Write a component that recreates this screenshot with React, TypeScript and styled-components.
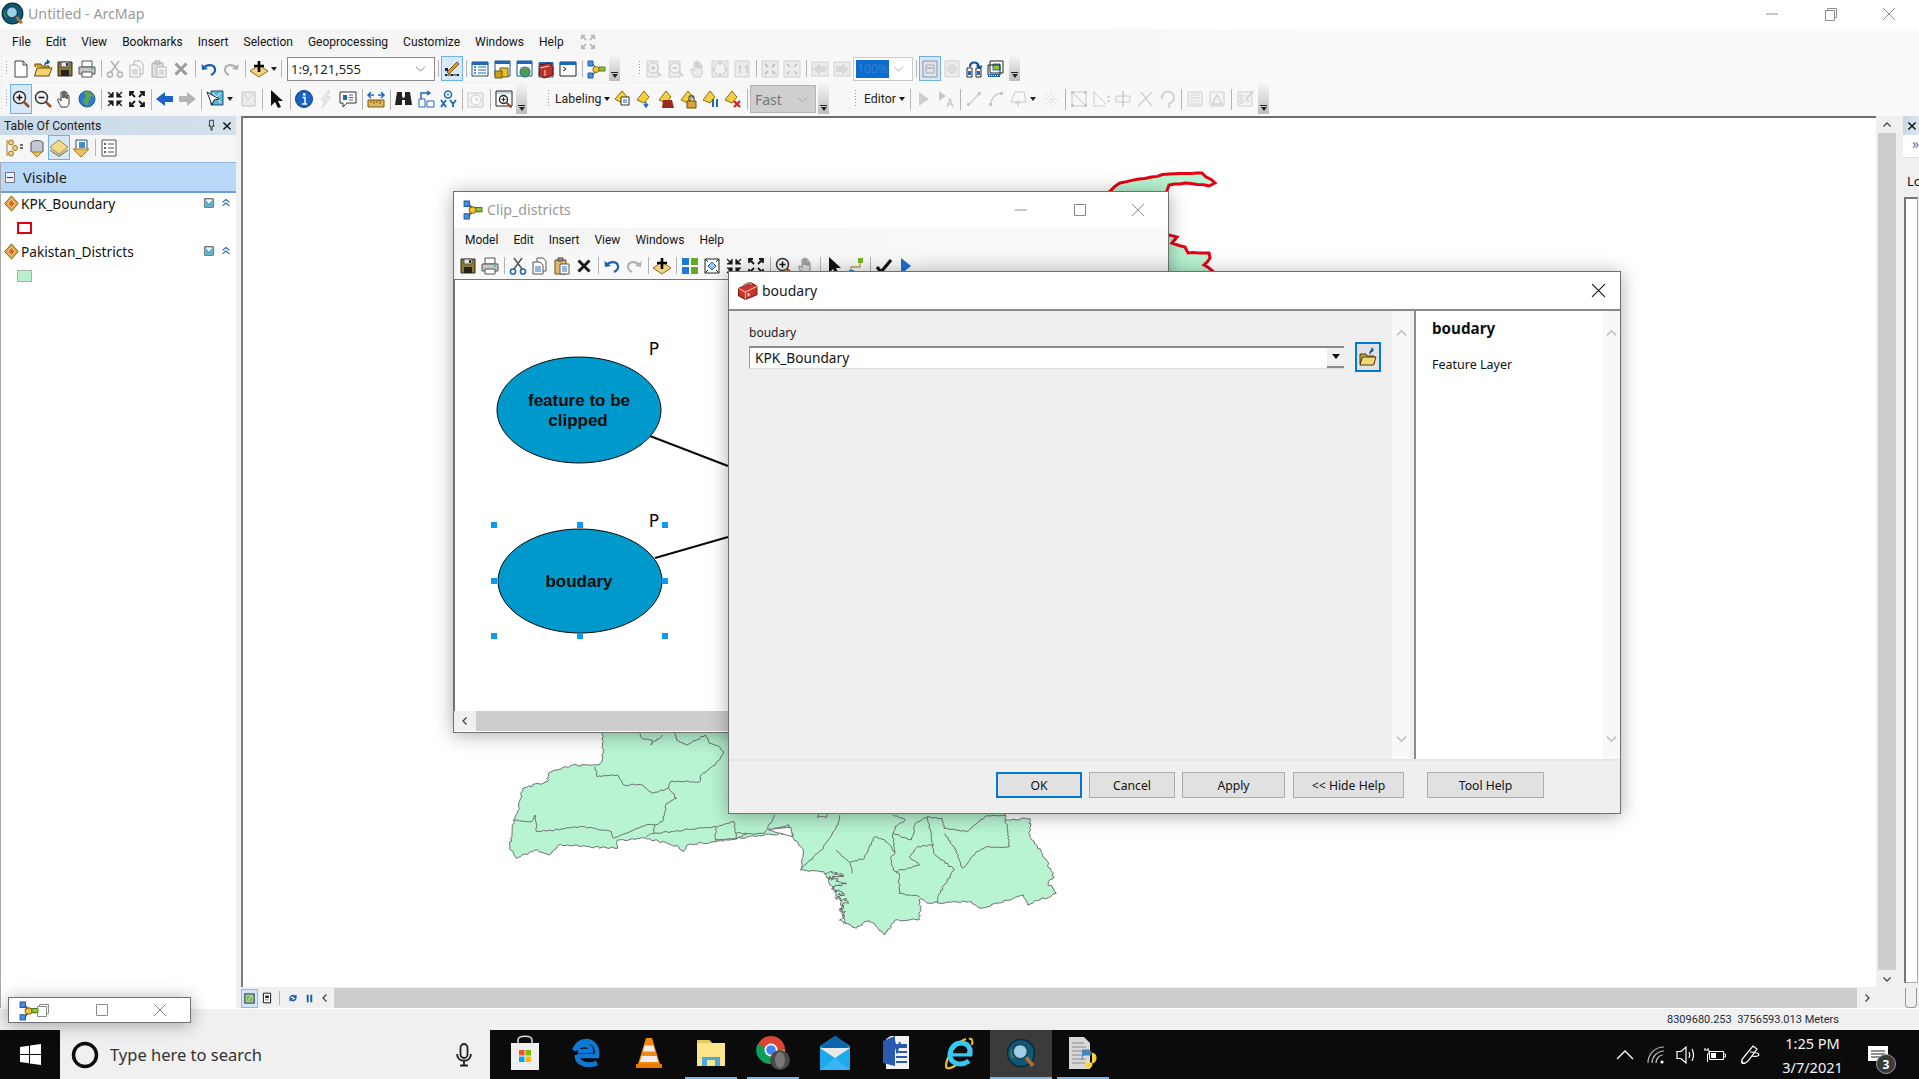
import React from 'react';
import styled, { createGlobalStyle } from 'styled-components';

const Global = createGlobalStyle`
  html, body { margin: 0; padding: 0; background: #fff; overflow: hidden; }
  #root { width: 1919px; height: 1079px; }
  * { box-sizing: border-box; }
`;
const UI = `"Noto Sans", "Open Sans", sans-serif`;
const NARROW = `Roboto, "Noto Sans", sans-serif`;

const Page = styled.div`
  position: relative; width: 1919px; height: 1079px; overflow: hidden; display: flex; flex-direction: column;
  font-family: ${UI}; font-size: 12px; color: #111; background: #fff;
`;
const TitleBar = styled.div`
  flex: 0 0 29px; display: flex; align-items: center; background: #fff; padding: 0 23px 2px 1px;
`;
const TitleText = styled.div<{ $size?: number; $dark?: boolean }>`
  font-size: ${p => p.$size ?? 14.2}px; color: ${p => (p.$dark ? '#1a1a1a' : '#999')}; margin-left: 4px; flex: 1; white-space: nowrap;
`;
const WinCtrls = styled.div<{ $w: number; $dark?: boolean }>`
  display: flex; width: ${p => p.$w}px; justify-content: space-between; color: ${p => (p.$dark ? '#111' : '#8c8c8c')};
`;
const MenuBar = styled.div<{ $left: number; $h: number }>`
  flex: 0 0 ${p => p.$h}px; display: flex; align-items: center; gap: 15px; padding: 0 0 2px ${p => p.$left}px;
  background: linear-gradient(90deg, #f4f4f4, #f9f9f9 70%);
`;
const MenuItem = styled.span`font-family: ${NARROW}; font-size: 12px; color: #141414; white-space: nowrap;`;
const Strip = styled.div`
  flex: 0 0 60px; display: flex; flex-direction: column; background: linear-gradient(90deg, #f4f4f4, #f9f9f9 70%);
`;
const StripRow = styled.div<{ $h: number; $mt?: number }>`
  display: flex; height: ${p => p.$h}px; margin-top: ${p => p.$mt ?? 0}px; align-items: stretch;
`;
const Toolbar = styled.div<{ $ml: number }>`
  display: flex; align-items: center; margin-left: ${p => p.$ml}px; background: #f8f8f8; height: 100%;
`;
const Grip = styled.div`
  width: 7px; height: 60%; display: flex; justify-content: center;
  &::before { content: ''; width: 1px; height: 100%; background: repeating-linear-gradient(180deg, #999 0 1px, transparent 1px 3px); }
`;
const Cell = styled.div<{ $on?: boolean; $off?: boolean; $w?: number }>`
  flex: 0 0 ${p => p.$w ?? 22}px; height: 100%; display: flex; align-items: center; justify-content: center;
  ${p => (p.$on ? 'background: #d6e8f9; outline: 1px solid #6fb0e8; outline-offset: -1px;' : '')}
  svg { ${p => (p.$off ? 'opacity: .42; filter: grayscale(1);' : '')} }
`;
const Sep = styled.div`
  flex: 0 0 6px; height: 70%; display: flex; justify-content: center;
  &::before { content: ''; width: 1px; background: #b4b4b4; }
`;
const Caret = styled.div<{ $ml?: number; $mr?: number }>`
  flex: 0 0 8px; margin-left: ${p => p.$ml ?? 0}px; margin-right: ${p => p.$mr ?? 0}px; display: flex; justify-content: center;
  &::before { content: ''; border: 3.5px solid transparent; border-top: 4px solid #222; border-bottom: 0; }
`;
const Overflow = styled.div<{ $ml: number }>`
  flex: 0 0 11px; margin-left: ${p => p.$ml}px; height: 100%; display: flex; flex-direction: column; justify-content: flex-end; align-items: center; padding-bottom: 3px; gap: 1px;
  background: linear-gradient(180deg, #f4f4f4, #bdbdbd);
  &::before { content: ''; width: 7px; height: 1px; background: #222; }
  &::after { content: ''; border: 3.5px solid transparent; border-top: 4px solid #222; border-bottom: 0; }
`;
const Combo = styled.div<{ $w: number; $ml?: number }>`
  flex: 0 0 ${p => p.$w}px; margin-left: ${p => p.$ml ?? 0}px; height: 24px; border: 1px solid #8a8a8a; background: #fff; display: flex; align-items: center; justify-content: space-between; padding: 0 7px 0 3px; font-size: 13px; color: #222;
`;
const ComboPct = styled(Combo)`border-color: #c9c9c9; padding-left: 2px;`;
const Selected = styled.span`background: #0a6cce; color: #3a7ed0; width: 33px; height: 18px; line-height: 18px; font-size: 12px; text-align: center; white-space: nowrap;`;
const FastCombo = styled.div`
  flex: 0 0 66px; height: 28px; border: 1px solid #b5b5b5; background: #cfcfcf; display: flex; align-items: center; justify-content: space-between; padding: 0 6px 0 4px; font-size: 14px; color: #777;
`;
const TextTool = styled.div<{ $w: number; $pl: number }>`
  flex: 0 0 ${p => p.$w}px; padding-left: ${p => p.$pl}px; display: flex; align-items: center; font-family: ${NARROW}; font-size: 12.3px; color: #222; gap: 3px; white-space: nowrap;
`;
const SmallCaret = styled.span`border: 3px solid transparent; border-top: 4px solid #111; border-bottom: 0; display: inline-block;`;
const Main = styled.div`flex: 1; display: flex; background: #f0f0f0; min-height: 0;`;
const Toc = styled.div`flex: 0 0 236px; display: flex; flex-direction: column; background: #fff;`;
const TocHead = styled.div`
  flex: 0 0 19px; background: linear-gradient(90deg, #cbd9e8, #d4e0ec); display: flex; align-items: center; padding: 0 3px 0 4px; font-family: ${NARROW}; font-size: 12.2px; color: #1a1a1a; justify-content: space-between;
`;
const TocHeadBtns = styled.div`display: flex; align-items: center; gap: 3.5px;`;
const TocTools = styled.div`flex: 0 0 27px; display: flex; align-items: center; padding: 0 0 2px 4px; background: #f6f6f6;`;
const TocBody = styled.div`flex: 1; border-left: 1px solid #aaa; background: #fff; display: flex; flex-direction: column;`;
const VisibleRow = styled.div`
  flex: 0 0 31px; background: #b9d7f7; border-top: 1px solid #90b7e0; border-bottom: 2px solid #6d9fd8; display: flex; align-items: center; padding-left: 4px; font-size: 14.5px; gap: 8px; color: #222;
`;
const MinusBox = styled.span`width: 10px; height: 11px; border: 1px solid #778; background: #eef; display: flex; align-items: center; justify-content: center; &::before { content: ''; width: 6px; height: 1px; background: #334; }`;
const LayerRow = styled.div`flex: 0 0 22px; display: flex; align-items: center; padding: 0 0 2px 2px; font-size: 13.7px; color: #111; gap: 1px;`;
const LayerName = styled.span`flex: 1; white-space: nowrap;`;
const LayerEnd = styled.div`display: flex; align-items: center; width: 33px; gap: 4px; padding-right: 3px;`;
const SwatchRow = styled.div`flex: 0 0 26px; display: flex; align-items: flex-start; padding: 7px 0 0 16px;`;
const Swatch = styled.span<{ $red?: boolean }>`
  width: 15px; height: 12px; ${p => (p.$red ? 'border: 2px solid #e40012; background: #fff;' : 'border: 1px solid #9ab8a4; background: #b8f0d0;')}
`;
const MapCol = styled.div`flex: 1; margin-left: 5px; display: flex; flex-direction: column; min-width: 0;`;
const MapRow = styled.div`flex: 1; display: flex; min-height: 0;`;
const Canvas = styled.div`
  position: relative; width: 1635px; flex: none; background: #fff; border-top: 2px solid #6e6e6e; border-left: 2px solid #7c7c7c; overflow: hidden;
`;
const MapSvg = styled.svg`display: block; position: absolute; left: 0; top: 0;`;
const VScroll = styled.div`flex: 0 0 18px; margin-left: 2px; display: flex; flex-direction: column; background: #f0f0f0;`;
const ScrollEnd = styled.div`flex: 0 0 17px; display: flex; align-items: center; justify-content: center; background: #f0f0f0;`;
const ScrollThumb = styled.div`flex: 1; background: #cdcdcd;`;
const MapBar = styled.div`flex: 0 0 20px; margin-top: 1px; display: flex; align-items: stretch; padding-right: 20px; background: #f0f0f0;`;
const MapBarSide = styled.div`display: flex; align-items: center; width: 93px;`;
const MiniBtn = styled.div<{ $w: number; $on?: boolean }>`
  flex: 0 0 ${p => p.$w}px; height: 19px; display: flex; align-items: center; justify-content: center; ${p => (p.$on ? 'background: #cfe5fa; outline: 1px solid #89bbe9; outline-offset: -1px;' : '')}
`;
const HThumb = styled.div`flex: 1; background: #cdcdcd;`;
const HEnd = styled.div`flex: 0 0 19px; display: flex; align-items: center; justify-content: center;`;
const RightPanel = styled.div`flex: 0 0 16px; margin-left: 7px; display: flex; flex-direction: column; background: #f0f0f0; overflow: hidden;`;
const RightHead = styled.div`flex: 0 0 19px; background: linear-gradient(90deg, #c8d7e7, #dde6ef); display: flex; align-items: center; justify-content: flex-end; padding-right: 1px;`;
const RightMark = styled.div`flex: 0 0 23px; background: #fff; color: #6b6bb0; font-size: 14px; line-height: 18px; padding-left: 9px; border-bottom: 1px solid #ddd; white-space: nowrap;`;
const RightLabel = styled.div`flex: 0 0 39px; padding: 14px 0 0 4px; font-size: 13px; white-space: nowrap;`;
const RightBox = styled.div`flex: 0 0 786px; margin-left: 1px; width: 14px; background: #fff; border: 1px solid #aaa; border-top: 2px solid #777; border-left: 2px solid #777;`;
const RightTab = styled.div`height: 20px; margin: 5px 0 0 2px; width: 12px; border: 1px solid #999; border-top: none; border-radius: 0 0 4px 4px;`;
const StatusBar = styled.div`flex: 0 0 22px; background: #f0f0f0; border-top: 1px solid #fff; display: flex; align-items: center; padding-left: 1667px; font-family: ${NARROW}; font-size: 11px; color: #1c2a3a; white-space: pre;`;
const Taskbar = styled.div`flex: 0 0 49px; background: #0b0b0b; display: flex; align-items: stretch;`;
const StartCell = styled.div`flex: 0 0 60px; display: flex; align-items: center; justify-content: center;`;
const SearchBox = styled.div`flex: 0 0 430px; background: #f0f0f0; display: flex; align-items: center; padding: 0 17px 0 10px; font-size: 16.5px; color: #333; gap: 10px;`;
const SearchText = styled.span`flex: 1; white-space: nowrap;`;
const Apps = styled.div`display: flex; margin-left: 4px;`;
const AppCell = styled.div<{ $run?: boolean; $active?: boolean }>`
  position: relative; flex: 0 0 62px; display: flex; align-items: center; justify-content: center; padding-bottom: 3px;
  ${p => (p.$active ? 'background: #3b3b3b;' : '')}
  ${p => (p.$run ? `&::after { content: ''; position: absolute; bottom: 0; left: ${p.$active ? 0 : 5}px; right: ${p.$active ? 0 : 5}px; height: 2px; background: #76b9ed; }` : '')}
`;
const Tray = styled.div`margin-left: auto; padding-right: 18px; display: flex; color: #fff;`;
const TrayCell = styled.div<{ $w: number }>`flex: 0 0 ${p => p.$w}px; display: flex; align-items: center; justify-content: center; position: relative;`;
const Clock = styled.div`text-align: center; font-size: 14.5px; line-height: 24px; color: #f4f4f4; white-space: nowrap;`;
const Badge = styled.span`position: absolute; left: 21px; top: 24px; width: 20px; height: 20px; border-radius: 50%; background: #3a3a3a; border: 1px solid #999; color: #fff; font-size: 12px; font-weight: 700; display: flex; align-items: center; justify-content: center;`;

/* floating windows */
const Window = styled.div<{ $x: number; $y: number; $w: number; $h: number; $z: number }>`
  position: absolute; left: ${p => p.$x}px; top: ${p => p.$y}px; width: ${p => p.$w}px; height: ${p => p.$h}px; z-index: ${p => p.$z};
  background: #fff; border: 1px solid #707070; box-shadow: 0 2px 18px rgba(0,0,0,.33); display: flex; flex-direction: column;
`;
const WinTitle = styled.div<{ $h: number; $pr: number; $pl: number; $pb?: number }>`
  flex: 0 0 ${p => p.$h}px; display: flex; align-items: center; padding: 0 ${p => p.$pr}px ${p => p.$pb ?? 0}px ${p => p.$pl}px; background: #fff;
`;
const ClipTools = styled.div`flex: 0 0 25px; display: flex; background: #f5f5f5; padding-left: 3px; width: 100%;`;
const ClipToolsInner = styled.div`display: flex; align-items: center; height: 100%; background: #f8f8f8; width: 464px; padding-bottom: 2px;`;
const ClipCanvas = styled.div`position: relative; flex: 1; border-top: 1px solid #777; border-left: 1px solid #777; background: #fff;`;
const ClipScroll = styled.div`flex: 0 0 20px; display: flex; background: #cdcdcd; margin-bottom: 1px;`;
const ClipScrollEnd = styled.div`flex: 0 0 22px; background: #f0f0f0; display: flex; align-items: center; justify-content: center;`;
const DiagramSvg = styled.svg`display: block; position: absolute; left: 0; top: 0;`;
const DiagramText = styled.text<{ $w?: number; $s: number }>`
  font-family: ${p => (p.$w === 400 ? '"DejaVu Sans", sans-serif' : '"Liberation Sans", Arial, sans-serif')}; font-weight: ${p => p.$w ?? 700}; font-size: ${p => p.$s}px; fill: #0c0c0c; text-anchor: middle;
`;
const DlgBody = styled.div`flex: 1; display: flex; background: #efefef; min-height: 0; border-top: 2px solid #8a8a8a;`;
const DlgLeft = styled.div`flex: 0 0 663px; padding: 13px 0 0 20px; background: #efefef;`;
const DlgScroll = styled.div<{ $bg: string }>`flex: 0 0 ${p => (p.$bg === '#fff' ? 17 : 18)}px; background: #f8f8f8; display: flex; flex-direction: column; justify-content: space-between; align-items: center; padding: 16px 0 14px;`;
const DlgGap = styled.div`flex: 0 0 4px; background: #efefef;`;
const DlgHelp = styled.div`flex: 1; display: flex; border-left: 2px solid #8a8a8a; background: #fff; min-width: 0; margin-top: -2px; border-top: 2px solid #8a8a8a;`;
const DlgHelpText = styled.div`flex: 1; padding: 7px 0 0 16px;`;
const HelpTitle = styled.div`font-weight: 700; font-size: 15.2px; color: #111; line-height: 20px;`;
const HelpDesc = styled.div`font-size: 12.5px; margin-top: 19px; line-height: 16px; color: #111;`;
const FieldLabel = styled.div`font-size: 12px; line-height: 16px; color: #222; margin-top: 1px;`;
const FieldRow = styled.div`display: flex; align-items: center; height: 30px; margin-top: 1px;`;
const FieldInput = styled.div`
  width: 595px; height: 23px; border-top: 2px solid #8a8a8a; border-left: 1px solid #999; border-bottom: 1px solid #ddd; background: #fff; display: flex; align-items: center; justify-content: space-between; font-size: 13.7px; padding-left: 5px; color: #111;
`;
const FieldArrow = styled.span`
  width: 17px; height: 20px; background: #f0f0f0; border-bottom: 2px solid #8a8a8a; display: flex; align-items: center; justify-content: center;
  &::before { content: ''; border: 4.5px solid transparent; border-top: 5px solid #111; border-bottom: 0; }
`;
const FolderBtn = styled.div`margin-left: 11px; width: 26px; height: 30px; border: 2px solid #0078d7; background: #e1e1e1; display: flex; align-items: center; justify-content: center;`;
const DlgFoot = styled.div`flex: 0 0 54px; background: #efefef; border-top: 2px solid #e6e6e6; display: flex; align-items: flex-start; padding: 11px 0 0 267px;`;
const DlgButton = styled.div<{ $w: number; $def?: boolean; $ml: number }>`
  flex: 0 0 ${p => p.$w}px; height: 26px; margin-left: ${p => p.$ml}px; background: #e1e1e1; border: ${p => (p.$def ? '2px solid #0078d7' : '1px solid #adadad')}; display: flex; align-items: center; justify-content: center; font-size: 12.2px; color: #111;
`;
const MiniWin = styled(Window)`flex-direction: row; align-items: center; padding-left: 9px; background: #fff; overflow: visible;`;
const MiniIconSlot = styled.div`flex: 0 0 26px; margin-top: 5px; margin-right: -8px;`;
const MiniCtrls = styled.div`flex: 1; display: flex; align-items: center; justify-content: space-between; padding-right: 23px; color: #8c8c8c;`;
const DarkClose = styled.div`color: #111; display: flex;`;

/* ---------------- icons ---------------- */
const s = (c: string, w = 1) => ({ stroke: c, strokeWidth: w, fill: 'none' } as const);
const icons: Record<string, React.ReactNode> = {
  new: <><path d="M4 2h8l4 4v12H4z" fill="#fff" stroke="#444" /><path d="M12 2v4h4" {...s('#444')} /></>,
  open: <><path d="M2 8V5h6l1 2h7v3" fill="#d7a92e" stroke="#5f4a0c" /><path d="M1.5 17 4 9h15l-3 8z" fill="#f2d36f" stroke="#5f4a0c" /><path d="M12 6c0-2 1-3 4-3m-2-2 2 2-2 2" {...s('#0f4f9a', 1.5)} /></>,
  save: <><path d="M3 3h14v14H3z" fill="#8b7b2a" stroke="#2d2d2d" /><path d="M6 3h8v5H6z" fill="#e6e6e6" stroke="#555" /><path d="M6 11h8v6H6z" fill="#222" /><path d="M11 4h2v3h-2z" fill="#333" /></>,
  print: <><path d="M5 2h10v6H5z" fill="#fff" stroke="#555" /><path d="M2 8h16v7H2z" fill="#c7c7c7" stroke="#555" /><path d="M5 13h10v5H5z" fill="#fff" stroke="#555" /><path d="M14 10h2" {...s('#2c7', 1.5)} /></>,
  cut: <><path d="M6 2 14 13M14 2 6 13" {...s('#555', 1.5)} /><circle cx="5" cy="15.5" r="2.6" {...s('#1e62b4', 1.5)} /><circle cx="15" cy="15.5" r="2.6" {...s('#1e62b4', 1.5)} /></>,
  copy: <><path d="M7 2h6l3 3v10H7z" fill="#fff" stroke="#555" /><path d="M3 6h7l3 3v9H3z" fill="#fff" stroke="#555" /><path d="M5 11h6M5 13h6M5 15h6" {...s('#2e6fc0')} /></>,
  paste: <><path d="M3 4h11v14H3z" fill="#e3ba6c" stroke="#6b4f14" /><path d="M6 2h5v3H6z" fill="#999" stroke="#444" /><path d="M8 8h9v10H8z" fill="#fff" stroke="#555" /><path d="M10 11h5M10 13h5M10 15h5" {...s('#2e6fc0')} /></>,
  del: <path d="M4.5 4.5 15.5 15.5M15.5 4.5 4.5 15.5" {...s('#1a1a1a', 3)} />,
  undo: <><path d="M5 9c3-4 10-4 11 1 .5 3-2 5-4 6" {...s('#1a5cb0', 2.2)} /><path d="M2.5 5 3 11l6-1z" fill="#1a5cb0" /></>,
  redo: <><path d="M15 9c-3-4-10-4-11 1-.5 3 2 5 4 6" {...s('#1a5cb0', 2.2)} /><path d="M17.5 5 17 11l-6-1z" fill="#1a5cb0" /></>,
  add: <><path d="M10 6 19 12l-9 6-9-6z" fill="#f2d27a" stroke="#8a6a20" /><path d="M10 2v11M5 7h10" {...s('#000', 2.6)} /></>,
  bars: <><path d="M3 15h2v2H3zM9 15h2v2H9zM15 15h2v2h-2z" fill="#222" /><path d="M5 16h4M11 16h4" {...s('#222')} /><path d="M5 13 15 3l2 2-10 10z" fill="#e0a028" stroke="#7a5510" /><path d="M3 9h3v3H3z" fill="#222" /></>,
  toc: <><path d="M2 3h16v14H2z" fill="#fff" stroke="#1b4f8c" /><path d="M2 3h16v3H2z" fill="#1e67b8" /><path d="M4 8h2M4 11h2M4 14h2" {...s('#1e67b8', 1.5)} /><path d="M8 8h8M8 11h8M8 14h8" {...s('#1e67b8')} /></>,
  cat: <><path d="M3 2h15v15H3z" fill="#fff" stroke="#1b4f8c" /><path d="M3 2h15v3H3z" fill="#1e67b8" /><path d="M8 9h8v9H8z" fill="#e6c032" stroke="#6b5610" /><path d="M3 12h7v7H3z" fill="#c8a21a" stroke="#6b5610" /></>,
  search: <><path d="M3 2h15v15H3z" fill="#fff" stroke="#1b4f8c" /><path d="M3 2h15v3H3z" fill="#1e67b8" /><circle cx="11" cy="13" r="5" fill="#4aa04e" stroke="#1e6a9a" /><path d="M6 9h10" {...s('#888')} /></>,
  box: <><path d="M3 4h14v14H3z" fill="#fff" stroke="#1b4f8c" /><path d="M3 3h14v3H3z" fill="#1e67b8" /><path d="M4 6 14 4l3 4v8l-9 3-5-3z" fill="#b8322a" stroke="#5a1510" /><path d="M4 9l9-2M9 11v6" {...s('#ffd2c8')} /></>,
  console: <><path d="M2 3h16v14H2z" fill="#fff" stroke="#222" /><path d="M2 3h16v3H2z" fill="#1e67b8" /><path d="M5 8l3 2-3 2" {...s('#222')} /></>,
  model: <><path d="M2 2h5v5H2zM2 14h5v5H2z" fill="#4a90e0" stroke="#1d5ca6" /><path d="M13 8h6v4h-6z" fill="#8dc43c" stroke="#4d7d16" /><ellipse cx="10" cy="10.5" rx="3.2" ry="3" fill="#f2c531" stroke="#8c6c12" /><path d="M7 5l2 3M7 16l2-3" {...s('#444')} /></>,
  zoomin: <><circle cx="8.5" cy="8.5" r="6" fill="#f4f4f4" stroke="#333" strokeWidth="1.5" /><path d="M5.5 8.5h6M8.5 5.5v6" {...s('#111', 1.5)} /><path d="M13 13l5 5" {...s('#a54b1a', 2.5)} /></>,
  zoomout: <><circle cx="8.5" cy="8.5" r="6" fill="#f4f4f4" stroke="#333" strokeWidth="1.5" /><path d="M5.5 8.5h6" {...s('#111', 1.5)} /><path d="M13 13l5 5" {...s('#a54b1a', 2.5)} /></>,
  hand: <path d="M6 18C4 14 2 11 3 10c1-.7 2 .5 3 2V4c0-1.500 2-1.500 2 0v5-6c0-1.500 2-1.500 2 0v6-5c0-1.500 2-1.500 2 0v6-3c0-1.500 2-1.500 2 0v7c0 2-1 3-2 4z" fill="#fff" stroke="#333" />,
  globe: <><circle cx="10" cy="10" r="8" fill="#2f7bcb" stroke="#1f5b99" /><path d="M6 4c3 1 4 3 2 5s-3 3 0 6 3 1 3-1 3-3 2-5 2-2 4-1c-1-4-7-7-11-4z" fill="#5aa845" /></>,
  fixin: <path d="M3 3l5 5M3 8h5V3M17 3l-5 5M17 8h-5V3M3 17l5-5M3 12h5v5M17 17l-5-5M17 12h-5v5" fill="#1a1a1a" stroke="#1a1a1a" strokeWidth="1.200" />,
  fixout: <path d="M8 8 3 3M3 7V3h4M12 8l5-5M17 7V3h-4M8 12l-5 5M3 13v4h4M12 12l5 5M17 13v4h-4" fill="none" stroke="#1a1a1a" strokeWidth="1.800" />,
  back: <path d="M1 10 10 3v4h8v6h-8v4z" fill="#1a62c4" />,
  fwd: <path d="M19 10 10 3v4H2v6h8v4z" fill="#b4b4b4" />,
  select: <><path d="M6 2h12v14H6z" fill="#53b9d4" stroke="#1d4f78" /><path d="M8 4l8 10M16 4l-6 5" {...s('#fff')} /><path d="M2 3l5 13 2-5 5-1z" fill="#fff" stroke="#222" /></>,
  clear: <><path d="M4 3h13v14H4z" fill="#ddd" stroke="#777" /><path d="M6 5l4 6 5-6" {...s('#888')} /></>,
  pointer: <path d="M5 1v16l4-4 3 6 3-1-3-6h5z" fill="#111" />,
  info: <><circle cx="10" cy="10" r="8.500" fill="#1a62c4" stroke="#0d3f8a" /><path d="M8.500 8.500h2.500v6.500M8 15h5" {...s('#fff', 1.5)} /><circle cx="10.300" cy="5.500" r="1.400" fill="#fff" /></>,
  flash: <path d="M13 1 5 11h4l-3 8 9-11h-4l3-7z" fill="#d8d8d8" stroke="#aaa" />,
  html: <><path d="M2 3h16v11h-9l-4 4v-4H2z" fill="#fff" stroke="#333" /><path d="M5 6h4v5H5z" fill="#1e67b8" /><path d="M11 6h4M11 8.500h4M11 11h4" {...s('#1e67b8')} /></>,
  measure: <><path d="M2 11h16v7H2z" fill="#e0b860" stroke="#7a5a10" /><path d="M5 11v3M8 11v4M11 11v3M14 11v4" {...s('#7a5a10')} /><path d="M2 6h6M5 3 2 6l3 3M18 6h-6M15 3l3 3-3 3" {...s('#1e67b8', 1.5)} /></>,
  find: <path d="M3 3h5v4l1 2 1 0 1-2V3h5l2 13h-7V11H8v5H1z" fill="#222" />,
  route: <><path d="M3 10h6v8H3zM11 12h7v6h-7z" fill="#fff" stroke="#1e67b8" /><path d="M5 10V4h8M11 2l3 2-3 2" {...s('#1e67b8', 1.4)} /></>,
  xy: <><circle cx="10" cy="5.500" r="3.500" {...s('#1e67b8', 1.5)} /><circle cx="10" cy="5.500" r="1" fill="#1e67b8" /><path d="M3 11l5 7M8 11l-5 7M12 11l3 4 3-4M15 15v3" {...s('#1e67b8', 1.8)} /></>,
  time: <><path d="M2 4h15v14H2z" fill="#eee" stroke="#888" /><circle cx="10" cy="11" r="5" fill="#fff" stroke="#999" /><path d="M10 8v3h3" {...s('#999')} /></>,
  viewer: <><path d="M2 2h16v15H2z" fill="#fff" stroke="#222" /><path d="M2 2h16v3H2z" fill="#1e67b8" opacity=".25" /><circle cx="9.500" cy="10.500" r="4" {...s('#222', 1.4)} /><path d="M7.500 10.500h4M9.500 8.500v4" {...s('#222')} /><path d="M12.500 13.500l5 5" {...s('#a54b1a', 2)} /></>,
  labPlace: <><path d="M9 2 2 10l7 4 7-4z" fill="#f2d040" stroke="#8c6c12" /><path d="M8 8h8v8H8z" fill="#fff" stroke="#333" /><path d="M10 11h4M10 13h4" {...s('#1e67b8')} /></>,
  lab: <><path d="M9 2 2 11l7 3 5-6z" fill="#f2d040" stroke="#8c6c12" /><path d="M11 13v5M9 15l2 3 2-3" {...s('#1e67b8', 1.4)} /></>,
  labBag: <><path d="M9 2 2 11l7 3 5-6z" fill="#f2d040" stroke="#8c6c12" /><path d="M6 11h9l2 8H5z" fill="#9a2a22" /></>,
  labLock: <><path d="M9 2 2 11l7 3 5-6z" fill="#f2d040" stroke="#8c6c12" /><path d="M8 12h9v7H8z" fill="#d8a530" stroke="#6b5010" /><path d="M10 12V9c0-3 5-3 5 0v3" {...s('#555', 1.3)} /></>,
  labPause: <><path d="M9 2 2 11l7 3 5-6z" fill="#f2d040" stroke="#8c6c12" /><path d="M12 10v8M16 10v8" {...s('#1e67b8', 2)} /></>,
  labX: <><path d="M9 2 2 11l7 3 5-6z" fill="#f2d040" stroke="#8c6c12" /><path d="M11 12l6 6M17 12l-6 6" {...s('#d92020', 2.2)} /></>,
  editArrow: <path d="M5 3v14l10-7z" fill="#999" />,
  editA: <><path d="M3 2v10l7-5z" fill="#888" /><path d="M11 18l3-8 3 8M12 15h4" {...s('#888', 1.4)} /></>,
  line: <><path d="M4 16 15 5" {...s('#999', 1.6)} /><path d="M14 3h3v3h-3zM3 14h3v3H3z" fill="#888" /></>,
  curve: <><path d="M5 16c0-6 3-11 10-12" {...s('#999', 1.6)} /><path d="M14 3h3v3h-3zM3 14h3v3H3z" fill="#888" /></>,
  poly: <><path d="M7 3h9l2 10H3z" {...s('#888')} /><path d="M10 11v7M7 14h6" {...s('#888')} /></>,
  star: <path d="M10 2v16M2 10h16M4 4l12 12M16 4 4 16" stroke="#aaa" strokeDasharray="2 1.500" fill="none" />,
  editBox: <><path d="M3 3h14v14H3z" {...s('#888')} /><path d="M3 3l14 14" {...s('#888')} /><path d="M2 2h3v3H2zM15 15h3v3h-3zM15 2h3v3h-3zM2 15h3v3H2z" fill="#888" /></>,
  editSplit: <><path d="M3 2v16M3 3l12 12M3 17h12" {...s('#999')} /><path d="M16 8h3M16 12h3" {...s('#999', 1.500)} /></>,
  editMove: <><path d="M3 7h14v6H3z" {...s('#888')} /><path d="M10 2v16" {...s('#888', 1.5)} /></>,
  editX: <path d="M3 17 17 3M6 3l11 14" {...s('#999', 1.3)} />,
  editQ: <path d="M5 10a6 6 0 1 1 10 3l-3 2v4" {...s('#aaa', 2.4)} />,
  attr: <><path d="M3 3h14v14H3z" fill="#eee" stroke="#999" /><path d="M5 6h10M5 9h10M5 12h10M5 15h10" {...s('#aaa')} /></>,
  sketch: <><path d="M3 3h14v14H3z" fill="#eee" stroke="#999" /><path d="M5 15 10 6l5 9z" {...s('#999', 1.3)} /></>,
  props: <><path d="M3 3h14v14H3z" fill="#eee" stroke="#999" /><path d="M5 6h3v3H5zM5 11h3v3H5zM10 7h5M10 12h5" {...s('#999')} /><path d="M11 11 18 2" {...s('#999', 1.5)} /></>,
  zIn: <><path d="M3 2h11v16H3z" fill="#ddd" stroke="#999" /><circle cx="9" cy="9" r="5" fill="#eee" stroke="#888" /><path d="M6.500 9h5M9 6.500v5" {...s('#888', 1.4)} /><path d="M13 13l4 4" {...s('#999', 2)} /></>,
  zOut: <><path d="M3 2h11v16H3z" fill="#ddd" stroke="#999" /><circle cx="9" cy="9" r="5" fill="#eee" stroke="#888" /><path d="M6.500 9h5" {...s('#888', 1.4)} /><path d="M13 13l4 4" {...s('#999', 2)} /></>,
  pan: <path d="M6 18C4 14 2 11 3 10c1-.7 2 .5 3 2V4c0-1.500 2-1.500 2 0v5-6c0-1.500 2-1.500 2 0v6-5c0-1.500 2-1.500 2 0v6-3c0-1.500 2-1.500 2 0v7c0 2-1 3-2 4z" fill="#ddd" stroke="#888" />,
  full: <><path d="M2 2h16v16H2z" fill="#ddd" stroke="#999" /><circle cx="10" cy="10" r="6" fill="#eee" stroke="#888" /><path d="M10 2v4M10 14v4M2 10h4M14 10h4" {...s('#888')} /></>,
  one: <><path d="M3 2h14v16H3z" fill="#ddd" stroke="#999" /><path d="M6 8l2-1v7M13 8l2-1v7M10.500 9v.1M10.500 12v.1" {...s('#888', 1.3)} /></>,
  pBack: <><path d="M2 3h16v14H2z" fill="#ddd" stroke="#999" /><path d="M3 10l7-6v3h6v6h-6v3z" fill="#aaa" /></>,
  pFwd: <><path d="M2 3h16v14H2z" fill="#ddd" stroke="#999" /><path d="M17 10l-7-6v3H4v6h6v3z" fill="#aaa" /></>,
  lFixIn: <><path d="M2 2h16v16H2z" fill="#ddd" stroke="#999" /><path d="M5 5l3 3M15 5l-3 3M5 15l3-3M15 15l-3-3" {...s('#777', 2.2)} /></>,
  lFixOut: <><path d="M2 2h16v16H2z" fill="#ddd" stroke="#999" /><path d="M8 8 5 5M12 8l3-3M8 12l-3 3M12 12l3 3" {...s('#777', 1.400)} /></>,
  page: <><path d="M3 2h14v16H3z" fill="#e0e4e8" stroke="#8a949e" /><path d="M7 9h6" {...s('#8a949e')} /><path d="M6 6h8v8H6z" {...s('#aab')} /></>,
  gear: <><path d="M3 2h14v16H3z" fill="#ddd" stroke="#999" /><circle cx="10" cy="10" r="4" fill="#bbb" stroke="#888" strokeDasharray="2 1" /></>,
  layoutChange: <><path d="M3 9h5v9H3zM12 9h5v9h-5z" fill="#fff" stroke="#222" /><path d="M4 12h3v4H4zM13 12h3v4h-3z" fill="#1e67b8" /><path d="M6 8c0-6 8-6 9 0M13 6l2 3 3-2" {...s('#0f4f9a', 2)} /></>,
  layoutZoom: <><path d="M4 2h13v12H4z" fill="#fff" stroke="#222" /><path d="M7 5h7v6H7z" fill="#8dc43c" stroke="#1e67b8" /><path d="M2 6h12v10H2z" {...s('#222')} /><path d="M2 15h12v3H2z" fill="#1e67b8" /><path d="M3 16.500h10" stroke="#fff" strokeDasharray="1 1" /></>,
  tocDraw: <><circle cx="6" cy="4.500" r="2.500" fill="#f2cc7a" stroke="#a07a1c" /><circle cx="6" cy="15.500" r="2.500" fill="#f2cc7a" stroke="#a07a1c" /><circle cx="10" cy="10" r="2.500" fill="#f2cc7a" stroke="#a07a1c" /><path d="M15 7h3M15 10h3" {...s('#444', 1.3)} /><path d="M2 2v16" {...s('#a07a1c')} /></>,
  tocSrc: <><ellipse cx="10" cy="5" rx="6" ry="2.500" fill="#c0c8d4" stroke="#555" /><path d="M4 5v8c0 3 12 3 12 0V5" fill="#c0c8d4" stroke="#555" /><path d="M5 14h10l-5 5z" fill="#f0c060" stroke="#a07a1c" /></>,
  tocDisp: <><path d="M10 2 19 9l-9 7-9-7z" fill="#f4d88a" stroke="#a08a4a" /><path d="M1 12l9 6 9-6" {...s('#a08a4a', 1.500)} /></>,
  tocSel: <><path d="M5 2h11v11H5z" fill="#fff" stroke="#1d4f78" /><path d="M8 4h6v6H8z" fill="#3f8fd0" /><path d="M2 11h16l-8 8z" fill="#f0c060" stroke="#a07a1c" /></>,
  tocOpts: <><path d="M3 2h14v16H3z" fill="#fff" stroke="#555" /><path d="M5 5h2v2H5zM5 9h2v2H5zM5 13h2v2H5z" fill="#666" /><path d="M9 6h6M9 10h6M9 14h6" {...s('#555')} /></>,
  fit: <><path d="M3 3h14v14H3z" fill="#fff" stroke="#222" /><path d="M6 10l4-4 4 4-4 4z" fill="#9bc4e8" stroke="#1e67b8" /><path d="M3 3l3 3M17 3l-3 3M3 17l3-3M17 17l-3-3" {...s('#222')} /></>,
  grid: <><path d="M2 2h7v7H2z M2 11h7v7H2z" fill="#1e7ad8" /><path d="M11 2h7v7h-7z M11 11h7v7h-7z" fill="#6aa81e" /></>,
  connect: <><path d="M5 16V11h9V5" {...s('#c0a040', 1.3)} /><path d="M12 2h5v5h-5z" fill="#7ab32a" /><path d="M3 14h5v5H3z" fill="#1e7ad8" /></>,
  check: <path d="M3 11l4 5L17 4" {...s('#111', 3.200)} />,
  run: <path d="M5 2v16l10-8z" fill="#1e6fd0" />,
  pin: <path d="M7 2h6v8h1v1h-3v6H9v-6H6v-1h1z" fill="none" stroke="#111" strokeWidth="1.200" />,
  x: <path d="M4 4 16 16M16 4 4 16" {...s('#111', 2.400)} />,
  layer: <><path d="M10 1l8 9-8 9-8-9z" fill="#d9a648" stroke="#7a5a14" /><path d="M10 5l4 5-4 5-4-5z" fill="#e75f30" stroke="#f5e2a0" /></>,
  checkbox: <><path d="M3 3h14v14H3z" fill="#fff" stroke="#223" strokeWidth="1.500" /><path d="M4 4l6 7 6-7v12H4z" fill="#41b6d8" /></>,
  dbl: <path d="M5 9l5-4 5 4M5 14l5-4 5 4" {...s('#1e62a8', 1.500)} />,
  mbData: <><path d="M3 3h14v14H3z" fill="#fff" stroke="#111" strokeWidth="1.600" /><path d="M5 5h10v10H5z" fill="#7ab85a" /><path d="M7 14l6-8" {...s('#dfe')} /></>,
  mbLayout: <><path d="M4 2h12v16H4z" fill="#fff" stroke="#111" strokeWidth="1.600" /><path d="M7 6h6v4H7z" fill="#222" /><path d="M7 13h6" {...s('#222')} /></>,
  mbRefresh: <path d="M4 10a6 6 0 0 1 10-4l2-2v6h-6l2-2a4 4 0 0 0-6 2zM16 10a6 6 0 0 1-10 4l-2 2v-6h6l-2 2a4 4 0 0 0 6-2z" fill="#1a5cb0" />,
  mbPause: <path d="M5 3h3.500v14H5zM11.500 3H15v14h-3.500z" fill="#1a5cb0" />,
  chevL: <path d="M13 3 6 10l7 7" {...s('#444', 2.600)} />,
  chevR: <path d="M7 3l7 7-7 7" {...s('#444', 2.600)} />,
  chevU: <path d="M3 13l7-7 7 7" {...s('#444', 2.600)} />,
  chevD: <path d="M3 7l7 7 7-7" {...s('#444', 2.600)} />,
  fadeU: <path d="M3 13l7-7 7 7" {...s('#c4c4c4', 2.800)} />,
  fadeD: <path d="M3 7l7 7 7-7" {...s('#c4c4c4', 2.800)} />,
  gchev: <path d="M3 7l7 7 7-7" {...s('#666', 1.200)} />,
  gchevL: <path d="M3 7l7 7 7-7" {...s('#999', 1.200)} />,
  expand: <path d="M8 8 3 3M3 7V3h4M12 8l5-5M17 7V3h-4M8 12l-5 5M3 13v4h4M12 12l5 5M17 13v4h-4" fill="none" stroke="#bbb" strokeWidth="2" />,
  arcmap: <><circle cx="10" cy="10" r="9" fill="#0d5a78" stroke="#052a3c" /><path d="M4 7c3-3 7-4 8-2s-2 4-4 5-2 5-4 3-1-4 0-6z" fill="#3a8a6a" /><circle cx="9.500" cy="9" r="5" fill="#9ad0e8" stroke="#21485c" strokeWidth="1.500" /><path d="M13.500 13 18 18.500" {...s('#a8703c', 2.600)} /></>,
  toolbox: <><path d="M1.500 8 13 2.500 19 6v8l-11 4.500-6.500-3.500z" fill="#c9362e" stroke="#6e1410" /><path d="M1.500 8l6.500 3.500L19 6M8 11.500v7" {...s('#ffb0a0')} /><path d="M6 5l5-2.500 3 1.500" {...s('#9b9b9b', 1.600)} /><path d="M10 12.500h2v3h-2z" fill="#ddd" /></>,
};
const Ico = ({ n, size = 20 }: { n: string; size?: number }) => (
  <svg width={size} height={size} viewBox="0 0 20 20">{icons[n]}</svg>
);

const Tools = ({ spec }: { spec: string }) => (
  <>
    {spec.split(' ').map((t, i) => {
      if (t === '|') return <Sep key={i} />;
      if (t === 'v') return <Caret key={i} />;
      if (t === 'vv') return <Caret key={i} $mr={3} />;
      if (t[0] === '-') return <Cell key={i} $off><Ico n={t.slice(1)} /></Cell>;
      if (t[0] === '*') return <Cell key={i} $on><Ico n={t.slice(1)} /></Cell>;
      return <Cell key={i}><Ico n={t} /></Cell>;
    })}
  </>
);

const Min = () => <svg width="14" height="14" viewBox="0 0 14 14"><path d="M1 7h12" stroke="currentColor" /></svg>;
const Max = () => <svg width="14" height="14" viewBox="0 0 14 14"><path d="M1.500 1.500h11v11h-11z" fill="none" stroke="currentColor" /></svg>;
const Restore = () => <svg width="14" height="14" viewBox="0 0 14 14"><path d="M1.500 3.500h9v10h-9zM3.500 3.500v-2h9v9h-2" fill="none" stroke="currentColor" /></svg>;
const Close = ({ size = 14 }: { size?: number }) => <svg width={size} height={size} viewBox="0 0 14 14"><path d="M1 1l12 12M13 1 1 13" fill="none" stroke="currentColor" /></svg>;

/* ---------------- map ---------------- */
let seed = 7;
const rnd = () => { seed = (seed * 16807) % 2147483647; return seed / 2147483647 - 0.5; };
const rough = (pts: number[][], amp = 3, step = 9) => {
  let d = '';
  pts.forEach((p, i) => {
    if (i === 0) { d += `M${p[0]} ${p[1]}`; return; }
    const q = pts[i - 1];
    const n = Math.max(1, Math.round(Math.hypot(p[0] - q[0], p[1] - q[1]) / step));
    for (let k = 1; k <= n; k++) {
      const t = k / n;
      const j = k === n ? 0 : amp;
      d += `L${(q[0] + (p[0] - q[0]) * t + rnd() * j).toFixed(1)} ${(q[1] + (p[1] - q[1]) * t + rnd() * j).toFixed(1)}`;
    }
  });
  return d;
};
const outline = [[395,400],[395,820],[385,855],[320,855],[262,878],[258,905],[198,925],[185,1000],[175,1020],[165,1105],[182,1135],[228,1110],[262,1125],[285,1095],[430,1105],[430,1080],[500,1075],[580,1100],[590,1115],[600,1095],[670,1085],[790,1065],[850,1060],[885,1110],[878,1170],[935,1175],[975,1260],[985,1325],[1015,1345],[1045,1320],[1085,1365],[1110,1320],[1170,1318],[1172,1255],[1190,1270],[1290,1265],[1320,1285],[1425,1245],[1435,1275],[1505,1240],[1485,1210],[1500,1190],[1470,1120],[1440,1070],[1440,1015],[1380,1020],[1380,900],[1600,600],[1600,0],[400,0]];
const borders = [
  [[485,760],[490,775],[515,780],[512,795],[540,765]],
  [[570,760],[575,780],[600,795],[645,765],[655,790],[680,800],[690,815],[680,840],[635,885],[632,905],[560,905],[555,925],[575,955],[550,970],[540,1025],[520,1035],[520,1060],[500,1070]],
  [[375,860],[380,890],[430,885],[445,915],[490,915],[515,940],[555,925]],
  [[175,1020],[220,1025],[228,1005],[232,1055],[345,1040],[415,1055],[420,1075],[500,1035],[520,1035]],
  [[520,1060],[670,1040],[672,1085]],
  [[670,1040],[715,1025],[720,1075],[672,1078]],
  [[720,1060],[790,1060],[815,1005]],
  [[720,1078],[750,1060]],
  [[800,1050],[850,1035],[860,1070]],
  [[975,1005],[965,1045],[930,1110],[880,1165]],
  [[965,1110],[1000,1150],[1005,1180]],
  [[1000,1145],[1035,1135],[1060,1070],[1085,1080],[1110,1115],[1105,1060],[1110,1040],[1135,1020],[1105,1005]],
  [[1105,1060],[1150,1080],[1160,1030],[1190,1010],[1225,1015],[1230,1045],[1285,1055],[1330,1010],[1380,1005]],
  [[1190,1010],[1205,1120],[1255,1170],[1250,1175],[1215,1250],[1215,1270]],
  [[1230,1060],[1260,1110],[1275,1165],[1310,1115],[1340,1100],[1390,1100],[1385,1040],[1380,1020]],
  [[1110,1115],[1100,1130],[1105,1170],[1120,1180],[1120,1240],[1170,1250]],
  [[1110,1175],[1170,1155],[1145,1130],[1165,1100],[1205,1095]],
  [[925,1000],[920,1012],[942,1012],[945,1000]],
];
const redTop = [[1104,194],[1118,183],[1137,179],[1167,174],[1200,173],[1213,183],[1207,186],[1183,183],[1167,185],[1163,195]];
const redMid = [[1160,234],[1175,237],[1170,243],[1183,247],[1186,253],[1207,253],[1208,258],[1202,265],[1214,274]];
const outlineD = rough(outline, 6, 6) + 'Z';
const borderD = borders.map(b => rough(b, 5, 6)).join('');
const clusterD = rough([[940,1178],[985,1185],[945,1195],[990,1210],[955,1225],[985,1240],[965,1255],[995,1265],[975,1285],[985,1300],[978,1320],[990,1330]], 11, 3);
const islandD = rough([[800,1048],[855,1042],[858,1070],[815,1056]], 2, 7) + 'Z';
const redTopD = rough(redTop, 1.2, 6);
const redMidD = rough(redMid, 1, 6);

const MapDrawing = () => (
  <MapSvg width="1635" height="872" viewBox="241 118 1635 872">
    <path d="M1100 196 1118 183 1137 179 1167 174 1200 173 1213 183 1207 186 1183 183 1167 185 1160 234 1175 237 1170 243 1183 247 1186 253 1207 253 1208 258 1202 265 1214 274 1200 600 600 700 1100 196Z" fill="#b8f4d2" />
    <g transform="translate(440 480) scale(.40816 .33333)">
      <path d={outlineD} fill="#b8f4d2" stroke="#6e6e6e" strokeWidth="1" vectorEffect="non-scaling-stroke" />
      <path d={borderD} fill="none" stroke="#6e6e6e" strokeWidth="1" vectorEffect="non-scaling-stroke" />
      <path d={islandD} fill="#fff" stroke="#6e6e6e" strokeWidth="1" vectorEffect="non-scaling-stroke" />
      <path d={clusterD} fill="none" stroke="#6e6e6e" strokeWidth="1" vectorEffect="non-scaling-stroke" />
    </g>
    <path d={redTopD} fill="none" stroke="#e40012" strokeWidth="3" />
    <path d={redMidD} fill="none" stroke="#e40012" strokeWidth="3" />
  </MapSvg>
);

/* ---------------- taskbar logos ---------------- */
const WinLogo = () => <svg width="21" height="21" viewBox="0 0 21 21"><path d="M0 3l9-1.300V10H0zM10 1.500 21 0v10H10zM0 11h9v8.300L0 18zM10 11h11v10L10 19.500z" fill="#fff" /></svg>;
const Cortana = () => <svg width="30" height="30" viewBox="0 0 30 30"><circle cx="15" cy="15" r="11.500" fill="none" stroke="#0c0c0c" strokeWidth="3.500" /></svg>;
const Mic = () => <svg width="18" height="26" viewBox="0 0 18 26"><rect x="5.500" y="2" width="7" height="14" rx="3.500" fill="none" stroke="#222" strokeWidth="1.800" /><path d="M2 12c0 9 14 9 14 0M9 19v4M5 23.500h8" fill="none" stroke="#222" strokeWidth="1.800" /></svg>;
const Store = () => <svg width="30" height="36" viewBox="0 0 30 36"><path d="M8 9V5c0-5 14-5 14 0v4" fill="none" stroke="#ddd" strokeWidth="1.500" /><path d="M1 8h28v27H1z" fill="#efefef" /><path d="M9 15h5.500v5.500H9z" fill="#f25022" /><path d="M15.500 15H21v5.500h-5.500z" fill="#7fba00" /><path d="M9 21.500h5.500V27H9z" fill="#00a4ef" /><path d="M15.500 21.500H21V27h-5.500z" fill="#ffb900" /></svg>;
const Edge = () => <svg width="30" height="30" viewBox="0 0 30 30"><path d="M5 18h20c1-9-4-15-11-15C9 3 5 6 2 12c3-3 7-5 11-5 4 0 6 3 6 6H6" fill="none" stroke="#0f78d4" strokeWidth="4.500" /><path d="M5 17c0 9 11 12 20 8" fill="none" stroke="#0f78d4" strokeWidth="5" /></svg>;
const Vlc = () => <svg width="26" height="34" viewBox="0 0 26 34"><path d="M10 2h6l8 26H2z" fill="#f28a12" /><path d="M8.500 9.500h9l1.500 6H7zM5.500 20h15l1.500 6H4z" fill="#eee" /><path d="M0 28h26v4H0z" fill="#e87a00" /></svg>;
const Folder = () => <svg width="30" height="28" viewBox="0 0 30 28"><path d="M1 1h12l3 3h13v23H1z" fill="#fde68a" /><path d="M1 1h12l3 3H1z" fill="#e8c860" /><path d="M6 18h18v9H6z" fill="#4aa8e0" /><path d="M11 21h8v6h-8z" fill="#fde68a" /></svg>;
const Chrome = () => <svg width="34" height="38" viewBox="0 0 34 38"><circle cx="15" cy="16" r="14" fill="#db4437" /><path d="M15 16 1.500 10A14 14 0 0 0 15 30z" fill="#0f9d58" /><path d="M15 16h14a14 14 0 0 1-14 14z" fill="#ffcd40" /><circle cx="15" cy="16" r="6.500" fill="#fff" /><circle cx="15" cy="16" r="4.800" fill="#4285f4" /><circle cx="24" cy="26" r="10" fill="#4a4a4a" /><ellipse cx="24" cy="26" rx="5" ry="8" fill="#787878" /></svg>;
const Mail = () => <svg width="32" height="34" viewBox="0 0 32 34"><path d="M1 10 16 0l15 10v24H1z" fill="#1ea8ee" /><path d="M1 10 16 0l15 10-15 9z" fill="#0a66b0" /><path d="M1 12h30l-15 10z" fill="#e8e8e8" /><path d="M1 34l15-12 15 12z" fill="#38b6f4" /></svg>;
const Word = () => <svg width="30" height="34" viewBox="0 0 30 34"><path d="M9 0h18v33H4V3z" fill="#f2f2f2" /><path d="M1 5l12-5v30L1 27z" fill="#2a5ab0" /><path d="M11 8h14v4H11zM14 15h11v2H14zM14 20h11v2H14zM14 25h11v2H14z" fill="#2a5ab0" /><path d="M8 6 11 15l2-7 2 7 3-9" fill="none" stroke="#2a5ab0" strokeWidth="2" /></svg>;
const Ie = () => <svg width="30" height="34" viewBox="0 0 30 34"><path d="M22 3C12 6 2 22 2 30c0 4 6 2 10-1" fill="none" stroke="#f0c020" strokeWidth="2.200" /><path d="M25 3c3-1 4 1 3 6" fill="none" stroke="#f0c020" strokeWidth="2" /><path d="M6 18h20c1-7-3-11-9-11s-11 5-11 12c0 8 10 12 19 6" fill="none" stroke="#38c8f4" strokeWidth="5" /><path d="M9 16h14" stroke="#111" strokeWidth="2.500" /></svg>;
const PyFile = () => <svg width="30" height="34" viewBox="0 0 30 34"><path d="M1 1h15l6 6v26H1z" fill="#d8d8d8" /><path d="M4 7h12M4 11h14M4 15h14M4 19h12M4 23h14M4 27h14" stroke="#8a8a8a" /><path d="M14 14h6c3 0 3 2 3 5h-7c-2 0-2 3-2 5" fill="#4584b6" stroke="#4584b6" /><path d="M24 17c3 0 4 3 4 5 0 4-2 5-5 5h-6c0 4 2 5 4 5s3-2 3-4" fill="#ffd43b" stroke="#ffd43b" /></svg>;
const TrayChevron = () => <svg width="20" height="12" viewBox="0 0 20 12"><path d="M2 10 10 2l8 8" fill="none" stroke="#fff" strokeWidth="1.300" /></svg>;
const Wifi = () => <svg width="20" height="20" viewBox="0 0 20 20"><path d="M2 18C2 9 9 2 18 2M6 18c0-6 5-12 12-12M10 18c0-4 3-8 7-8" fill="none" stroke="#bbb" strokeWidth="1.200" /><circle cx="16" cy="17" r="1.600" fill="#fff" /></svg>;
const Speaker = () => <svg width="22" height="20" viewBox="0 0 22 20"><path d="M2 6.500h4L11 2v16l-5-4.500H2z" fill="none" stroke="#fff" strokeWidth="1.200" /><path d="M14 7c1 2 1 4 0 6M17 4c2 4 2 8 0 12" fill="none" stroke="#fff" strokeWidth="1.200" /></svg>;
const Battery = () => <svg width="22" height="16" viewBox="0 0 22 16"><path d="M5.500 4.500h14v8h-14zM19.500 7h2v3h-2z" fill="none" stroke="#fff" /><path d="M7 6h5v5H7z" fill="#fff" /><path d="M1 3V1M4 3V1M0 3h5v4H3.500v8" fill="none" stroke="#fff" /></svg>;
const Pen = () => <svg width="22" height="22" viewBox="0 0 22 22"><path d="M14 2l4 3L9 17c-2 2-5 3-6 2s0-4 2-6zM4 14c-3 4 0 6 3 5M11 8c4 0 9 1 9 3 0 1-4 2-7 1" fill="none" stroke="#fff" strokeWidth="1.200" /></svg>;
const Note = () => <svg width="22" height="20" viewBox="0 0 22 20"><path d="M1 1h20v15h-5l-1 3-4-3H1z" fill="#fff" /><path d="M4 6h14M4 9h14M4 12h10" stroke="#222" /></svg>;
const FolderOpen = () => <svg width="18" height="20" viewBox="0 0 18 20"><path d="M1 7h6l1.500 2H15v8H1z" fill="#c8a035" stroke="#4a3a0a" /><path d="M1 18 3.500 10H17l-2.500 8z" fill="#f2d97c" stroke="#4a3a0a" /><path d="M11 7c0-3 1-4 3-4m-1.500-2L14 3l-1.500 2" fill="none" stroke="#0f4f9a" strokeWidth="1.400" /></svg>;

const Handle = ({ x, y }: { x: number; y: number }) => <rect x={x - 3} y={y - 3} width="6" height="6" fill="#0a9bf5" />;
const Oval = ({ cx, cy, rx, ry }: { cx: number; cy: number; rx: number; ry: number }) => <ellipse cx={cx} cy={cy} rx={rx} ry={ry} fill="#0099cc" stroke="#0a0a0a" />;

export default function App() {
  return (
    <Page>
      <Global />
      <TitleBar>
        <Ico n="arcmap" size={23} />
        <TitleText>Untitled - ArcMap</TitleText>
        <WinCtrls $w={131}><Min /><Restore /><Close /></WinCtrls>
      </TitleBar>
      <MenuBar $left={12} $h={27}>
        {['File', 'Edit', 'View', 'Bookmarks', 'Insert', 'Selection', 'Geoprocessing', 'Customize', 'Windows', 'Help'].map(m => <MenuItem key={m}>{m}</MenuItem>)}
        <Cell $w={18}><Ico n="expand" size={18} /></Cell>
      </MenuBar>
      <Strip>
        <StripRow $h={25}>
          <Toolbar $ml={3}>
            <Grip />
            <Tools spec="new open save print | -cut -copy -paste -del | undo -redo | add v |" />
            <Combo $w={148} $ml={3}>1:9,121,555<Ico n="gchev" size={13} /></Combo>
            <Tools spec="| *bars | toc cat search box console | model" />
            <Overflow $ml={2} />
          </Toolbar>
          <Toolbar $ml={16}>
            <Grip />
            <Tools spec="-zIn -zOut -pan -full -one | -lFixIn -lFixOut | -pBack -pFwd" />
            <ComboPct $w={60}><Selected>100%</Selected><Ico n="gchevL" size={13} /></ComboPct>
            <Tools spec="| *page -gear layoutChange layoutZoom" />
            <Overflow $ml={2} />
          </Toolbar>
        </StripRow>
        <StripRow $h={30} $mt={3}>
          <Toolbar $ml={3}>
            <Grip />
            <Tools spec="*zoomin zoomout hand globe | fixin fixout | back fwd | select vv -clear | pointer | info -flash html | measure | find route xy | -time | viewer" />
            <Overflow $ml={1} />
          </Toolbar>
          <Toolbar $ml={18}>
            <Grip />
            <TextTool $w={60} $pl={3}>Labeling<SmallCaret /></TextTool>
            <Tools spec="labPlace lab labBag labLock labPause labX |" />
            <FastCombo>Fast<Ico n="gchevL" size={13} /></FastCombo>
            <Overflow $ml={2} />
          </Toolbar>
          <Toolbar $ml={23}>
            <Grip />
            <TextTool $w={48} $pl={5}>Editor<SmallCaret /></TextTool>
            <Tools spec="| -editArrow -editA | -line -curve -poly vv -star | -editBox -editSplit -editMove -editX -editQ | -attr -sketch | -props" />
            <Overflow $ml={2} />
          </Toolbar>
        </StripRow>
      </Strip>
      <Main>
        <Toc>
          <TocHead>Table Of Contents<TocHeadBtns><Ico n="pin" size={13} /><Ico n="x" size={12} /></TocHeadBtns></TocHead>
          <TocTools>
            <Tools spec="tocDraw tocSrc *tocDisp tocSel | tocOpts" />
          </TocTools>
          <TocBody>
            <VisibleRow><MinusBox />Visible</VisibleRow>
            <LayerRow><Ico n="layer" size={17} /><LayerName>KPK_Boundary</LayerName><LayerEnd><Ico n="checkbox" size={12} /><Ico n="dbl" size={14} /></LayerEnd></LayerRow>
            <SwatchRow><Swatch $red /></SwatchRow>
            <LayerRow><Ico n="layer" size={17} /><LayerName>Pakistan_Districts</LayerName><LayerEnd><Ico n="checkbox" size={12} /><Ico n="dbl" size={14} /></LayerEnd></LayerRow>
            <SwatchRow><Swatch /></SwatchRow>
          </TocBody>
        </Toc>
        <MapCol>
          <MapRow>
            <Canvas><MapDrawing /></Canvas>
            <VScroll>
              <ScrollEnd><Ico n="chevU" size={10} /></ScrollEnd>
              <ScrollThumb />
              <ScrollEnd><Ico n="chevD" size={10} /></ScrollEnd>
            </VScroll>
          </MapRow>
          <MapBar>
            <MapBarSide>
              <MiniBtn $w={17} $on><Ico n="mbData" size={13} /></MiniBtn>
              <MiniBtn $w={17}><Ico n="mbLayout" size={12} /></MiniBtn>
              <MiniBtn $w={9}><Sep /></MiniBtn>
              <MiniBtn $w={17}><Ico n="mbRefresh" size={12} /></MiniBtn>
              <MiniBtn $w={17}><Ico n="mbPause" size={11} /></MiniBtn>
              <MiniBtn $w={14}><Ico n="chevL" size={10} /></MiniBtn>
            </MapBarSide>
            <HThumb />
            <HEnd><Ico n="chevR" size={10} /></HEnd>
          </MapBar>
        </MapCol>
        <RightPanel>
          <RightHead><Ico n="x" size={12} /></RightHead>
          <RightMark>»</RightMark>
          <RightLabel>Lo</RightLabel>
          <RightBox />
          <RightTab />
        </RightPanel>
      </Main>
      <StatusBar>8309680.253  3756593.013 Meters</StatusBar>
      <Taskbar>
        <StartCell><WinLogo /></StartCell>
        <SearchBox><Cortana /><SearchText>Type here to search</SearchText><Mic /></SearchBox>
        <Apps>
          <AppCell><Store /></AppCell>
          <AppCell><Edge /></AppCell>
          <AppCell><Vlc /></AppCell>
          <AppCell $run><Folder /></AppCell>
          <AppCell $run><Chrome /></AppCell>
          <AppCell><Mail /></AppCell>
          <AppCell><Word /></AppCell>
          <AppCell><Ie /></AppCell>
          <AppCell $run $active><Ico n="arcmap" size={30} /></AppCell>
          <AppCell $run><PyFile /></AppCell>
        </Apps>
        <Tray>
          <TrayCell $w={30}><TrayChevron /></TrayCell>
          <TrayCell $w={31}><Wifi /></TrayCell>
          <TrayCell $w={29}><Speaker /></TrayCell>
          <TrayCell $w={30}><Battery /></TrayCell>
          <TrayCell $w={40}><Pen /></TrayCell>
          <TrayCell $w={85}><Clock>1:25 PM<br />3/7/2021</Clock></TrayCell>
          <TrayCell $w={46}><Note /><Badge>3</Badge></TrayCell>
        </Tray>
      </Taskbar>

      <Window $x={453} $y={191} $w={716} $h={542} $z={2}>
        <WinTitle $h={36} $pr={23} $pl={8} $pb={1}>
          <Ico n="model" size={21} />
          <TitleText>Clip_districts</TitleText>
          <WinCtrls $w={131}><Min /><Max /><Close /></WinCtrls>
        </WinTitle>
        <MenuBar $left={11} $h={26}>
          {['Model', 'Edit', 'Insert', 'View', 'Windows', 'Help'].map(m => <MenuItem key={m}>{m}</MenuItem>)}
        </MenuBar>
        <ClipTools>
          <ClipToolsInner>
            <Tools spec="save print | cut copy paste del | undo -redo | add | grid fit fixin fixout | zoomin pan | pointer connect | check run" />
          </ClipToolsInner>
        </ClipTools>
        <ClipCanvas>
          <DiagramSvg width="714" height="432" viewBox="455 280 714 432">
            <path d="M650 436 728 466M655 558 728 537" stroke="#0a0a0a" strokeWidth="2" />
            <Oval cx={579} cy={410} rx={82} ry={53} />
            <Oval cx={580} cy={581} rx={82} ry={52} />
            <DiagramText $s={17} x={579} y={406}>feature to be</DiagramText>
            <DiagramText $s={17} x={578} y={426}>clipped</DiagramText>
            <DiagramText $s={17} x={579} y={587}>boudary</DiagramText>
            <DiagramText $s={17} $w={400} x={654} y={355}>P</DiagramText>
            <DiagramText $s={17} $w={400} x={654} y={527}>P</DiagramText>
            {[[494,525],[580,525],[665,525],[494,581],[665,581],[494,636],[580,636],[665,636]].map(([x, y]) => <Handle key={`${x}-${y}`} x={x} y={y} />)}
          </DiagramSvg>
        </ClipCanvas>
        <ClipScroll><ClipScrollEnd><Ico n="chevL" size={10} /></ClipScrollEnd></ClipScroll>
      </Window>

      <Window $x={728} $y={271} $w={893} $h={543} $z={3}>
        <WinTitle $h={37} $pr={14} $pl={8}>
          <Ico n="toolbox" size={21} />
          <TitleText $size={14} $dark>boudary</TitleText>
          <DarkClose><Close size={15} /></DarkClose>
        </WinTitle>
        <DlgBody>
          <DlgLeft>
            <FieldLabel>boudary</FieldLabel>
            <FieldRow>
              <FieldInput>KPK_Boundary<FieldArrow /></FieldInput>
              <FolderBtn><FolderOpen /></FolderBtn>
            </FieldRow>
          </DlgLeft>
          <DlgScroll $bg="#efefef"><Ico n="fadeU" size={13} /><Ico n="fadeD" size={13} /></DlgScroll>
          <DlgGap />
          <DlgHelp>
            <DlgHelpText>
              <HelpTitle>boudary</HelpTitle>
              <HelpDesc>Feature Layer</HelpDesc>
            </DlgHelpText>
            <DlgScroll $bg="#fff"><Ico n="fadeU" size={13} /><Ico n="fadeD" size={13} /></DlgScroll>
          </DlgHelp>
        </DlgBody>
        <DlgFoot>
          <DlgButton $w={86} $ml={0} $def>OK</DlgButton>
          <DlgButton $w={86} $ml={7}>Cancel</DlgButton>
          <DlgButton $w={103} $ml={7}>Apply</DlgButton>
          <DlgButton $w={111} $ml={8}>&lt;&lt; Hide Help</DlgButton>
          <DlgButton $w={117} $ml={23}>Tool Help</DlgButton>
        </DlgFoot>
      </Window>

      <MiniWin $x={8} $y={997} $w={183} $h={26} $z={4}>
        <MiniIconSlot><Ico n="model" size={21} /></MiniIconSlot>
        <MiniCtrls><Restore /><Max /><Close /></MiniCtrls>
      </MiniWin>
    </Page>
  );
}
